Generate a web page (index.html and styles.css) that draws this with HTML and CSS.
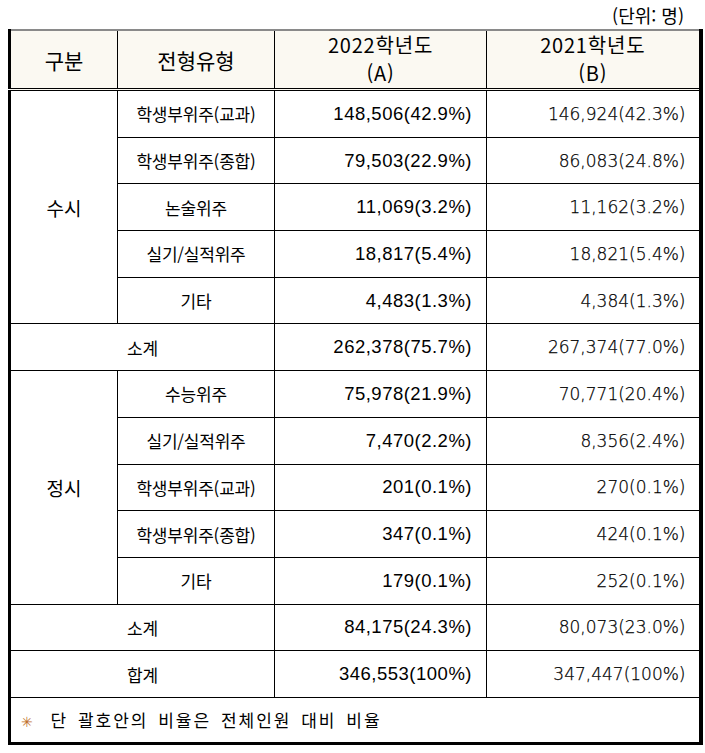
FILE: index.html
```html
<!DOCTYPE html>
<html lang="ko">
<head>
<meta charset="utf-8">
<link rel="stylesheet" href="styles.css">
</head>
<body>
<div class="page">
  <div class="unit">(단위: 명)</div>
  <table class="stats">
    <colgroup>
      <col class="c1"><col class="c2"><col class="c3"><col class="c4">
    </colgroup>
    <thead>
      <tr class="head">
        <th>구분</th>
        <th>전형유형</th>
        <th class="yr"><span>2022학년도</span><span>(A)</span></th>
        <th class="yr"><span>2021학년도</span><span>(B)</span></th>
      </tr>
    </thead>
    <tbody>
      <tr><td class="grp" rowspan="5">수시</td><td class="kind">학생부위주(교과)</td><td class="a">148,506(42.9%)</td><td class="b">146,924(42.3%)</td></tr>
      <tr><td class="kind">학생부위주(종합)</td><td class="a">79,503(22.9%)</td><td class="b">86,083(24.8%)</td></tr>
      <tr><td class="kind">논술위주</td><td class="a">11,069(3.2%)</td><td class="b">11,162(3.2%)</td></tr>
      <tr><td class="kind">실기/실적위주</td><td class="a">18,817(5.4%)</td><td class="b">18,821(5.4%)</td></tr>
      <tr><td class="kind">기타</td><td class="a">4,483(1.3%)</td><td class="b">4,384(1.3%)</td></tr>
      <tr><td class="kind" colspan="2">소계</td><td class="a">262,378(75.7%)</td><td class="b">267,374(77.0%)</td></tr>
      <tr><td class="grp" rowspan="5">정시</td><td class="kind">수능위주</td><td class="a">75,978(21.9%)</td><td class="b">70,771(20.4%)</td></tr>
      <tr><td class="kind">실기/실적위주</td><td class="a">7,470(2.2%)</td><td class="b">8,356(2.4%)</td></tr>
      <tr><td class="kind">학생부위주(교과)</td><td class="a">201(0.1%)</td><td class="b">270(0.1%)</td></tr>
      <tr><td class="kind">학생부위주(종합)</td><td class="a">347(0.1%)</td><td class="b">424(0.1%)</td></tr>
      <tr><td class="kind">기타</td><td class="a">179(0.1%)</td><td class="b">252(0.1%)</td></tr>
      <tr><td class="kind" colspan="2">소계</td><td class="a">84,175(24.3%)</td><td class="b">80,073(23.0%)</td></tr>
      <tr><td class="kind" colspan="2">합계</td><td class="a">346,553(100%)</td><td class="b">347,447(100%)</td></tr>
      <tr class="note"><td colspan="4"><span class="mark">✳&#xFE0E;</span> 단 괄호안의 비율은 전체인원 대비 비율</td></tr>
    </tbody>
  </table>
</div>
</body>
</html>
```

FILE: styles.css
```css
html, body {
  margin: 0;
  padding: 0;
  background: #ffffff;
}

.page {
  width: 705px;
  height: 753px;
  padding: 0 0 0 8px;
  box-sizing: border-box;
  font-family: "Noto Sans CJK KR", "Liberation Sans", sans-serif;
  color: #000;
}

.unit {
  height: 29px;
  box-sizing: border-box;
  padding: 4px 21px 0 0;
  text-align: right;
  font-size: 18px;
  line-height: 22px;
}

.stats {
  width: 691px;
  border-collapse: collapse;
  table-layout: fixed;
  border-top: 2px solid #8a8a8a;
  border-left: 3px solid #000;
  border-right: 4px solid #000;
  border-bottom: 3px solid #000;
}

.c1 { width: 108px; }
.c2 { width: 157px; }
.c3 { width: 212px; }
.c4 { width: 214px; }

.stats th,
.stats td {
  border: 1px solid #000;
  padding: 0;
}

.head th {
  background: #fbf9f2;
  font-weight: normal;
  font-size: 21px;
  line-height: 24px;
  height: 57px;
  border-bottom: 3px double #000;
  border-top: 2px solid #8a8a8a;
  text-align: center;
}

.head th.yr {
  vertical-align: top;
}

.head th.yr span {
  display: block;
  font-size: 20px;
  line-height: 27px;
  letter-spacing: 0.8px;
}

.head th.yr span + span {
  margin-top: 1px;
}

.stats tbody td {
  height: 45.7px;
  text-align: center;
}

.grp {
  font-size: 19px;
}

.kind {
  font-size: 17px;
  letter-spacing: -0.2px;
}

.stats td.a {
  text-align: right;
  padding-right: 14px;
  font-family: "Liberation Sans", sans-serif;
  font-size: 18.5px;
  letter-spacing: 0.5px;
}

.stats td.b {
  text-align: right;
  padding-right: 13px;
  font-family: "DejaVu Sans", sans-serif;
  font-weight: 200;
  font-size: 17px;
  color: #000;
  -webkit-text-stroke: 0.25px #000;
}

.stats .note td {
  height: 44px;
  text-align: left;
  padding-left: 10px;
  font-size: 17px;
  letter-spacing: 2px;
  word-spacing: 3px;
}

.mark {
  display: inline-block;
  color: #c0702c;
  font-family: "DejaVu Sans", sans-serif;
  font-size: 14px;
  margin-right: 6px;
}
```
